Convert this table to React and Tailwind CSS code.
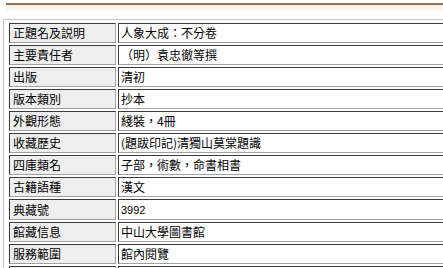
const rows = [
  ['正題名及説明', '人象大成：不分卷'],
  ['主要責任者', '（明）袁忠徹等撰'],
  ['出版', '清初'],
  ['版本類別', '抄本'],
  ['外觀形態', '綫裝，4冊'],
  ['收藏歷史', '(題跋印記)清獨山莫棠題識'],
  ['四庫類名', '子部，術數，命書相書'],
  ['古籍語種', '漢文'],
  ['典藏號', '3992', true],
  ['館藏信息', '中山大學圖書館'],
  ['服務範圍', '館內閱覽'],
  ['', ''],
]

const cell =
  'h-[20px] p-0 border border-t-[#3a3a3a] border-l-[#3a3a3a] border-b-[#a0a0a0] border-r-[#a0a0a0] align-middle leading-[18px]'

export default function App() {
  return (
    <div className="w-[443px] h-[268px] overflow-hidden bg-white text-black font-['Noto_Sans_CJK_TC','Noto_Sans_CJK_SC',sans-serif] text-[12px]">
      <div className="pt-[3px] pl-[6px]">
        <div className="h-[2px] bg-[#8a7453]" />
        <div className="h-[7px] bg-gradient-to-b from-[#f6ecd3] to-white" />
      </div>
      <div className="ml-[3px] mt-[7px] border-l border-t border-[#c4c4c4] pl-[3px] pt-[1px] w-[600px]">
        <table className="border-separate border-spacing-[2px] w-full">
          <tbody>
            {rows.map(([k, v, small], i) => (
              <tr key={i}>
                <td className={`${cell} w-[107px] bg-[#eeeeee] pl-[3px]`}>{k}</td>
                <td className={`${cell} bg-white pl-[2px]`}>
                  {small ? (
                    <span className="font-['Liberation_Sans',sans-serif] text-[11px]">{v}</span>
                  ) : (
                    v
                  )}
                </td>
              </tr>
            ))}
          </tbody>
        </table>
      </div>
    </div>
  )
}
